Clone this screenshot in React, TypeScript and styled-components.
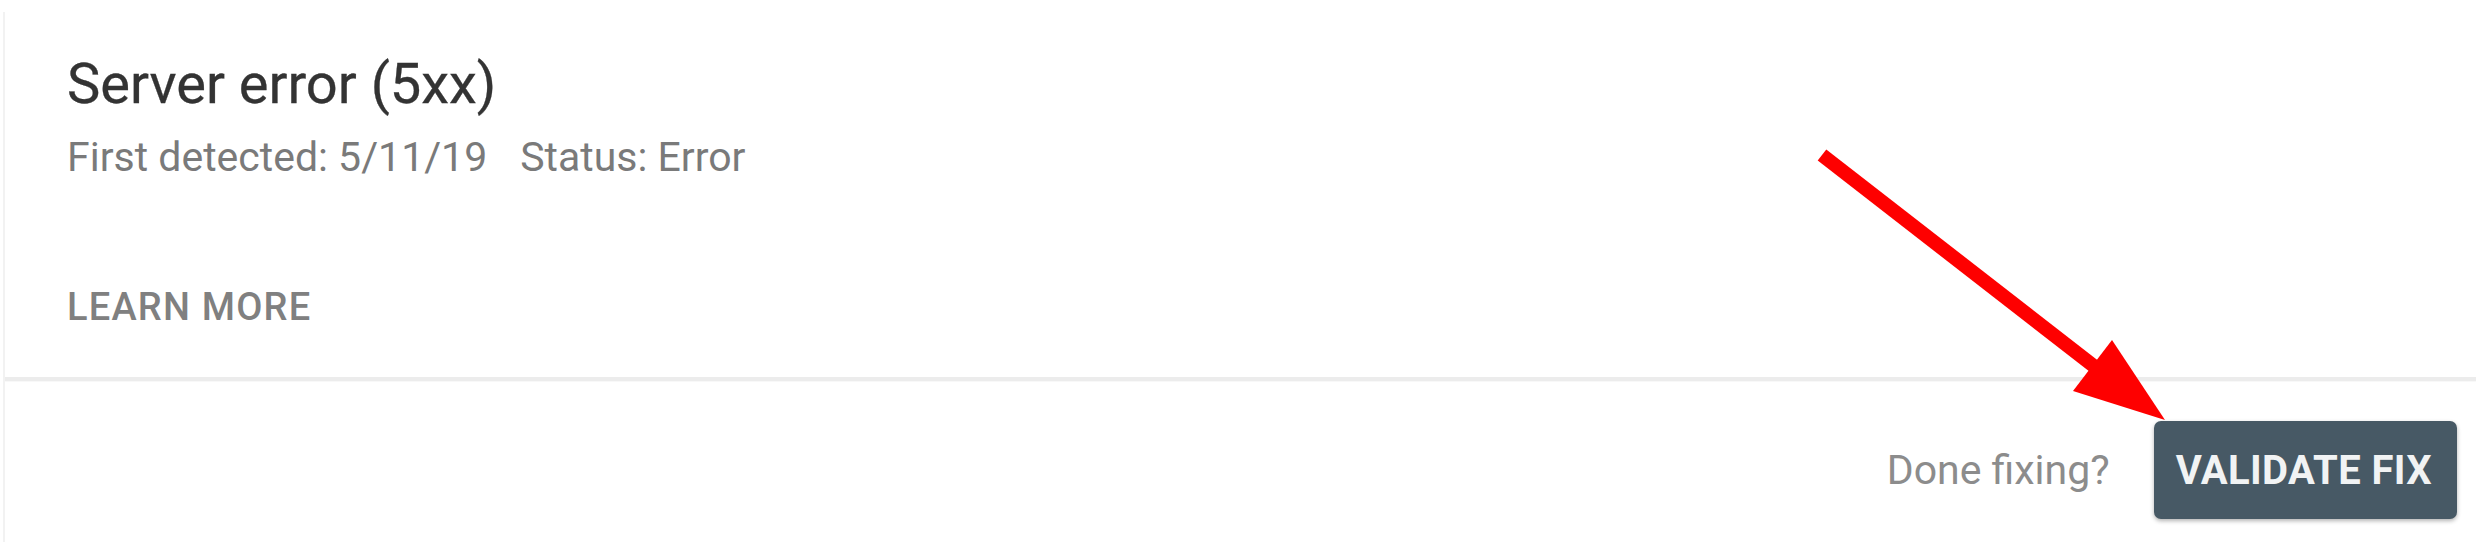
import React, { FC } from 'react';
import styled, { createGlobalStyle } from 'styled-components';

const GlobalStyle = createGlobalStyle`
	html, body {
		margin: 0;
		padding: 0;
		background: #ffffff;
	}
	body {
		font-family: Roboto, 'Liberation Sans', Arial, sans-serif;
	}
`;

const Page = styled.div`
	position: relative;
	width: 2476px;
	height: 542px;
	overflow: hidden;
	background: #ffffff;
`;

const Card = styled.div`
	display: flex;
	flex-direction: column;
	margin: 12px 0 0 3px;
	height: 530px;
	border-left: 2px solid #f2f2f2;
	box-sizing: border-box;
`;

const Header = styled.div`
	display: flex;
	flex-direction: column;
	padding: 40px 0 48px 62px;
`;

const Title = styled.h2`
	margin: 0;
	font-size: 56px;
	line-height: 64px;
	font-weight: 400;
	color: #333333;
	-webkit-text-stroke: 0.3px #333333;
`;

const Meta = styled.div`
	display: flex;
	gap: 33px;
	margin-top: 17px;
	font-size: 41px;
	line-height: 48px;
	color: #7a7a7a;
`;

const LearnMore = styled.a`
	margin-top: 104px;
	font-size: 38px;
	line-height: 44px;
	font-weight: 500;
	letter-spacing: 1.2px;
	color: #808080;
	text-transform: uppercase;
	cursor: pointer;
`;

const Divider = styled.hr`
	margin: 0;
	border: none;
	height: 4px;
	background: #ececec;
	box-shadow: 0 1px 1px rgba(0, 0, 0, 0.03);
`;

const Footer = styled.div`
	display: flex;
	align-items: center;
	justify-content: flex-end;
	gap: 44px;
	padding: 40px 19px 0 0;
`;

const Hint = styled.span`
	font-size: 41px;
	color: #8c8c8c;
`;

const ValidateButton = styled.button`
	height: 98px;
	padding: 0 25px 0 22px;
	border: none;
	border-radius: 7px;
	background: #475965;
	box-shadow: 0 2px 4px rgba(0, 0, 0, 0.3);
	font-family: inherit;
	font-size: 40px;
	font-weight: 700;
	letter-spacing: 0.4px;
	color: #f1f3f4;
	cursor: pointer;
`;

const Overlay = styled.svg`
	position: absolute;
	left: 0;
	top: 0;
	pointer-events: none;
`;

const Arrow: FC = () => (
	<Overlay width={2476} height={542} viewBox="0 0 2476 542">
		<line x1={1822} y1={155} x2={2095} y2={367} stroke="#fe0000" strokeWidth={14} />
		<polygon points="2112,340 2073,391 2165,420" fill="#fe0000" />
	</Overlay>
);

export default function App() {
	return (
		<>
			<GlobalStyle />
			<Page>
				<Card>
					<Header>
						<Title>Server error (5xx)</Title>
						<Meta>
							<span>First detected: 5/11/19</span>
							<span>Status: Error</span>
						</Meta>
						<LearnMore>Learn more</LearnMore>
					</Header>
					<Divider />
					<Footer>
						<Hint>Done fixing?</Hint>
						<ValidateButton>VALIDATE FIX</ValidateButton>
					</Footer>
				</Card>
				<Arrow />
			</Page>
		</>
	);
}
